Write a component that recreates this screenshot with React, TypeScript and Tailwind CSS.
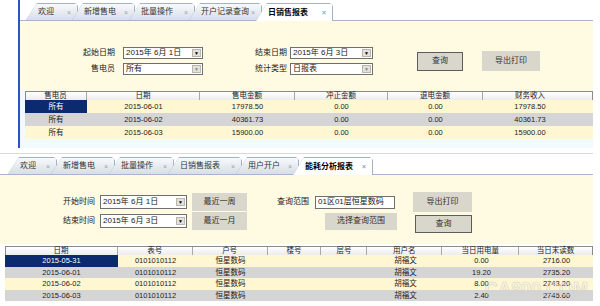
import React from 'react';

type TabDef = { label: string; w: string };

const topTabs: TabDef[] = [
  { label: '欢迎', w: 'w-[52px]' },
  { label: '新增售电', w: 'w-[63px]' },
  { label: '批量操作', w: 'w-[66px]' },
  { label: '开户记录查询', w: 'w-[73px]' },
  { label: '日销售报表', w: 'w-[77px]' },
];

const bottomTabs: TabDef[] = [
  { label: '欢迎', w: 'w-[49px]' },
  { label: '新增售电', w: 'w-[64px]' },
  { label: '批量操作', w: 'w-[65px]' },
  { label: '日销售报表', w: 'w-[74px]' },
  { label: '用户开户', w: 'w-[63px]' },
  { label: '能耗分析报表', w: 'w-[80px]' },
];

const salesCols = [
  { title: '售电员', w: 'w-[62px]' },
  { title: '日期', w: 'w-[113px]' },
  { title: '售电金额', w: 'w-[95px]' },
  { title: '冲正金额', w: 'w-[93px]' },
  { title: '退电金额', w: 'w-[95px]' },
  { title: '财务收入', w: 'w-[94px]' },
];

const salesRows = [
  ['所有', '2015-06-01', '17978.50', '0.00', '0.00', '17978.50'],
  ['所有', '2015-06-02', '40361.73', '0.00', '0.00', '40361.73'],
  ['所有', '2015-06-03', '15900.00', '0.00', '0.00', '15900.00'],
];

const usageCols = [
  { title: '日期', w: 'w-[113px]' },
  { title: '表号', w: 'w-[75px]' },
  { title: '户号', w: 'w-[75px]' },
  { title: '楼号', w: 'w-[54px]' },
  { title: '层号', w: 'w-[46px]' },
  { title: '用户名', w: 'w-[75px]' },
  { title: '当日用电量', w: 'w-[77px]' },
  { title: '当日末读数', w: 'w-[73px]' },
];

const usageRows = [
  ['2015-05-31', '0101010112', '恒星数码', '', '', '胡福文', '0.00', '2716.00'],
  ['2015-06-01', '0101010112', '恒星数码', '', '', '胡福文', '19.20', '2735.20'],
  ['2015-06-02', '0101010112', '恒星数码', '', '', '胡福文', '8.00', '2743.20'],
  ['2015-06-03', '0101010112', '恒星数码', '', '', '胡福文', '2.40', '2745.60'],
];

function Tabs({ tabs, active, className }: { tabs: TabDef[]; active: number; className?: string }) {
  return (
    <div className={`flex h-[18px] items-end border-b border-[#a7b6c8] ${className ?? ''}`}>
      {tabs.map((t, i) => {
        const isActive = i === active;
        return (
          <div
            key={t.label}
            className={`${t.w} ${i === 0 ? '' : '-ml-[6px]'} ${
              isActive ? 'relative z-10 -mb-px h-[18px]' : 'h-[17px]'
            } shrink-0 bg-[#a3b2c4] pt-px pr-px [clip-path:polygon(11px_0,calc(100%-3px)_0,100%_3px,100%_100%,0_100%)]`}
          >
            <div
              className={`flex h-full items-center pl-[12px] pr-[6px] [clip-path:polygon(10px_0,100%_0,100%_100%,0_100%)] ${
                isActive
                  ? 'bg-white font-bold text-black'
                  : 'bg-gradient-to-b from-[#f8f9fb] to-[#d7dee8] text-[#333]'
              }`}
            >
              <span className="text-[8px] leading-none">{t.label}</span>
              <span className="ml-auto text-[7px] leading-none text-[#9aa3ad]">×</span>
            </div>
          </div>
        );
      })}
    </div>
  );
}

function Select({ value, w, h = 'h-[12px]', faint }: { value: string; w: string; h?: string; faint?: boolean }) {
  return (
    <div className={`flex ${w} ${h} items-center border border-[#6f6f6f] bg-white pl-[2px] pr-px`}>
      <span className="text-[8px] leading-none text-[#222]">{value}</span>
      <div className="ml-auto flex h-[8px] w-[9px] items-center justify-center border border-[#b9b6ad] bg-[#e4e1d9]">
        <span className={`text-[5px] leading-none ${faint ? 'text-[#888]' : 'text-black'}`}>▼</span>
      </div>
    </div>
  );
}

function Btn({ label, className }: { label: string; className: string }) {
  return (
    <div className={`flex items-center justify-center bg-[#d9d6cb] text-[8px] leading-none text-[#333] ${className}`}>
      {label}
    </div>
  );
}

function Grid({
  cols,
  rows,
  rowH,
}: {
  cols: { title: string; w: string }[];
  rows: string[][];
  rowH: string;
}) {
  return (
    <div className="flex flex-col text-[7.5px] leading-none text-[#222]">
      <div className="flex h-[9px] border-t border-x border-[#8a8a8a] bg-gradient-to-b from-white to-[#ececec]">
        {cols.map((c, i) => (
          <div
            key={c.title}
            className={`${c.w} flex items-center justify-center ${i < cols.length - 1 ? 'border-r border-[#a8a8a8]' : ''} ${i === 0 ? '-ml-px' : ''}`}
          >
            {c.title}
          </div>
        ))}
      </div>
      {rows.map((r, ri) => (
        <div key={ri} className={`flex ${rowH} ${ri % 2 === 1 ? 'bg-[#d5d5d5]' : 'bg-[#fff6d2]'}`}>
          {r.map((cell, ci) => (
            <div
              key={ci}
              className={`${cols[ci].w} flex items-center justify-center ${
                ri === 0 && ci === 0 ? 'bg-[#0c2a6e] text-white' : ''
              }`}
            >
              {cell}
            </div>
          ))}
        </div>
      ))}
    </div>
  );
}

export default function App() {
  return (
    <div className="relative h-[306px] w-[600px] overflow-hidden bg-white font-['Liberation_Sans','Noto_Sans_CJK_SC',sans-serif] text-[#222]">
      {/* 日销售报表 */}
      <div className="ml-[18px] flex h-[148px] w-[575px] flex-col border-l-[2px] border-[#2f52c6]">
        <div className="bg-white pt-[3px]">
          <Tabs tabs={topTabs} active={4} className="pl-[6px]" />
        </div>
        <div className="bg-[#fffbe3] pb-[16px] pt-[26px]">
          <div className="flex items-center">
            <div className="grid grid-cols-[103px_80px_87px_83px] grid-rows-[12px_12px] items-center gap-y-[4px] text-[8px] leading-none">
              <span className="pr-[8px] text-right">起始日期</span>
              <Select value="2015年 6月 1日" w="w-[80px]" />
              <span className="pr-[3px] text-right">结束日期</span>
              <Select value="2015年 6月 3日" w="w-[83px]" />
              <span className="pr-[8px] text-right">售电员</span>
              <Select value="所有" w="w-[80px]" faint />
              <span className="pr-[3px] text-right">统计类型</span>
              <Select value="日报表" w="w-[83px]" faint />
            </div>
            <Btn label="查询" className="ml-[44px] h-[19px] w-[46px] border border-[#5c5c5c]" />
            <Btn label="导出打印" className="ml-[19px] h-[20px] w-[58px]" />
          </div>
        </div>
        <div className="flex-1 bg-[#f1fafc] pl-[5px]">
          <Grid cols={salesCols} rows={salesRows} rowH="h-[13px]" />
        </div>
      </div>

      {/* 能耗分析报表 */}
      <div className="mt-[5px] w-[593px] border-t border-[#d9d9d9] pt-[3px]">
        <Tabs tabs={bottomTabs} active={5} className="pl-[8px]" />
        <div className="flex h-[69px] items-start bg-[#fffbe3] pt-[17px] text-[8px] leading-none">
          <div className="mt-px grid grid-cols-[100px_87px_60px] grid-rows-[18px_18px] items-center gap-y-px">
            <span className="pr-[5px] text-right">开始时间</span>
            <Select value="2015年 6月 1日" w="w-[87px]" h="h-[14px]" />
            <Btn label="最近一周" className="ml-[5px] h-[18px] w-[55px]" />
            <span className="pr-[5px] text-right">结束时间</span>
            <Select value="2015年 6月 3日" w="w-[87px]" h="h-[14px]" />
            <Btn label="最近一月" className="ml-[5px] h-[18px] w-[55px]" />
          </div>
          <div className="ml-[30px] mt-px grid grid-cols-[38px_82px] grid-rows-[18px_18px] items-center gap-y-px">
            <span>查询范围</span>
            <div className="flex h-[13px] w-[80px] items-center border border-[#6f6f6f] bg-white pl-[2px]">
              01区01层恒星数码
            </div>
            <span />
            <Btn label="选择查询范围" className="ml-[10px] h-[17px] w-[72px]" />
          </div>
          <div className="ml-[16px] flex flex-col items-start gap-[3px]">
            <Btn label="导出打印" className="h-[20px] w-[59px]" />
            <Btn label="查询" className="ml-[2px] h-[18px] w-[57px] border border-[#5c5c5c]" />
          </div>
        </div>
        <div className="pl-[5px] pt-[2px]">
          <Grid cols={usageCols} rows={usageRows} rowH="h-[11.5px]" />
        </div>
      </div>

      <span className="absolute bottom-[8px] right-[12px] text-[18px] font-bold leading-none text-white/0 [-webkit-text-stroke:0.6px_#d4d4d4]">
        CA800.COM
      </span>
    </div>
  );
}
